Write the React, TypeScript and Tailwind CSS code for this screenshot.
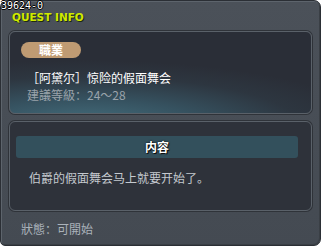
import React from "react";

const cjk = { fontFamily: '"Noto Sans CJK SC", "Noto Sans CJK TC", sans-serif' };

export default function App() {
  return (
    <div className="w-[322px] h-[248px] bg-white relative" style={cjk}>
      <div className="w-[321px] h-[246px] rounded-[7px] rounded-bl-[5px] bg-gradient-to-b from-[#4b5159] to-[#444a52] border border-[#2b2f35] shadow-[inset_1px_1px_0_#5d646c,inset_-1px_-1px_0_#3a3f45] flex flex-col px-[8px]">
        <div className="h-[30px] pl-[3px] pt-[10px]">
          <div className="text-[10.5px] leading-[13px] font-bold text-[#d0ea00] [text-shadow:1px_1px_0_#1e2a10]" style={{ fontFamily: '"DejaVu Sans", sans-serif' }}>
            QUEST INFO
          </div>
        </div>
        <div className="h-[83px] rounded-[6px] border border-[#5a6169] shadow-[0_0_0_1px_#2f3339] bg-[radial-gradient(ellipse_95%_80%_at_25%_115%,#45707f_0%,#365260_40%,#2d3640_75%,#2a2e37_100%)] pl-[11px] pt-[10px] flex flex-col">
          <div className="w-[60px] h-[16px] rounded-full bg-[#bf9b73] flex items-center justify-center text-[12px] leading-[16px] font-bold text-white">
            職業
          </div>
          <div className="ml-[6px] mt-[12px] text-[12px] leading-[16px] text-white">［阿黛尔］惊险的假面舞会</div>
          <div className="ml-[6px] mt-[1px] text-[12px] leading-[16px] text-[#9aa3ab]">建議等級：24～28</div>
        </div>
        <div className="mt-[7px] h-[90px] rounded-[6px] border border-[#5a6169] shadow-[0_0_0_1px_#2f3339] bg-[#2e323a] pt-[14px] pl-[6px] pr-[13px] flex flex-col">
          <div className="h-[22px] rounded-[3px] bg-[#33505c] flex items-center justify-center text-[12px] font-bold text-white [text-shadow:0_0_2px_#000,1px_1px_0_#111]">
            内容
          </div>
          <div className="ml-[13px] mt-[12px] text-[12px] leading-[16px] text-[#c4c9ce]">伯爵的假面舞会马上就要开始了。</div>
        </div>
        <div className="pl-[12px] mt-[10px] text-[12px] leading-[16px] text-[#aab2ba]">狀態：可開始</div>
      </div>
      <div className="absolute left-[1px] top-[0px] text-[10px] leading-[11px] text-white [text-shadow:1px_0_0_#000,-1px_0_0_#000,0_1px_0_#000,0_-1px_0_#000]" style={{ fontFamily: '"DejaVu Sans Mono", monospace' }}>
        39624-0
      </div>
    </div>
  );
}
